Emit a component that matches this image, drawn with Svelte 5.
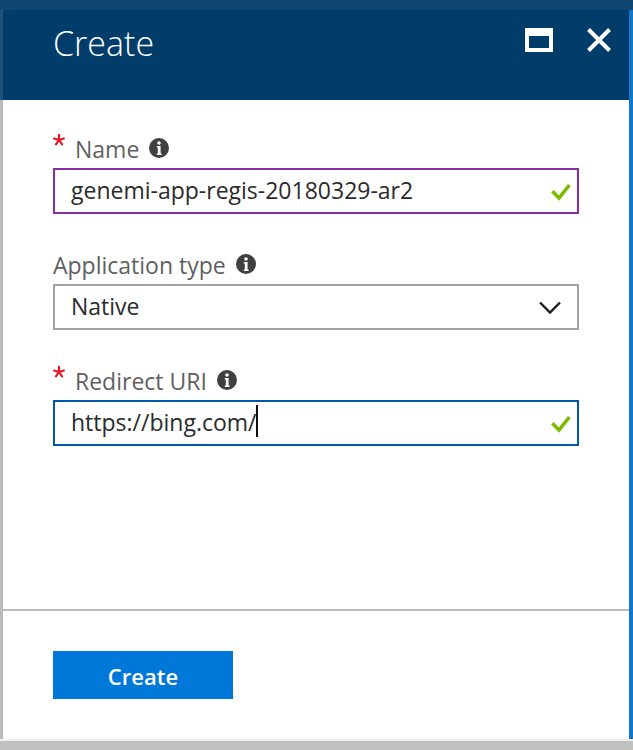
<script>
  let name = $state('genemi-app-regis-20180329-ar2');
  let appType = $state('Native');
  let redirectUri = $state('https://bing.com/');
</script>

{#snippet info()}
  <svg class="info" viewBox="0 0 20 20" aria-hidden="true">
    <circle cx="10" cy="10" r="10" fill="#404040" />
    <circle cx="10" cy="5" r="1.8" fill="#fff" />
    <path d="M7.8 8h3.8v7.4h1V17H7.8v-1.6h1V9.4h-1z" fill="#fff" />
  </svg>
{/snippet}

{#snippet star()}
  <svg class="star" viewBox="0 0 12 12" aria-hidden="true">
    <path d="M6 6V0M6 6L.3 4.2M6 6l5.7-1.8M6 6L2.4 11.2M6 6l3.6 5.2" stroke="#e81123" stroke-width="2.1" fill="none" />
  </svg>
{/snippet}

{#snippet check()}
  <svg class="check" viewBox="0 0 20 18" aria-hidden="true">
    <path d="M1.4 8.2L8 15L18.4 2" stroke="#7fba00" stroke-width="3.6" fill="none" />
  </svg>
{/snippet}

<div class="page">
  <div class="topbar"></div>
  <div class="stage">
    <div class="edge"></div>
    <section class="blade">
      <header>
        <h1>Create</h1>
        <div class="actions">
          <button type="button" aria-label="Maximize">
            <svg width="28" height="24" viewBox="0 0 28 24">
              <path d="M0 0h28v24H0zM4 8v12h20V8z" fill="#fff" fill-rule="evenodd" />
            </svg>
          </button>
          <button type="button" aria-label="Close">
            <svg width="24" height="24" viewBox="0 0 24 24">
              <path d="M1.5 1.5l21 21M22.5 1.5l-21 21" stroke="#fff" stroke-width="4" />
            </svg>
          </button>
        </div>
      </header>

      <form id="create-app" onsubmit={(e) => e.preventDefault()}>
        <div class="field">
          <label for="name">{@render star()}<span>Name</span>{@render info()}</label>
          <div class="box">
            <input id="name" class="edited" type="text" required bind:value={name} />
            {@render check()}
          </div>
        </div>
        <div class="field">
          <label for="type"><span>Application type</span>{@render info()}</label>
          <div class="box">
            <select id="type" bind:value={appType}>
              <option>Native</option>
              <option>Web app / API</option>
            </select>
            <svg class="chevron" viewBox="0 0 22 14" aria-hidden="true">
              <path d="M1 1.5l10 10l10-10" stroke="#1f1f1f" stroke-width="2.4" fill="none" />
            </svg>
          </div>
        </div>
        <div class="field">
          <label for="uri">{@render star()}<span>Redirect URI</span>{@render info()}</label>
          <div class="box">
            <input id="uri" class="active" type="text" required bind:value={redirectUri} />
            <i class="caret"></i>
            {@render check()}
          </div>
        </div>
      </form>

      <footer>
        <button class="primary" type="submit" form="create-app">Create</button>
      </footer>
    </section>
    <div class="accent"></div>
  </div>
  <div class="scrollbar"></div>
</div>

<style>
  .page {
    display: flex;
    flex-direction: column;
    min-height: 100vh;
    font-family: "Open Sans", "Noto Sans", sans-serif;
    font-size: 23px;
    color: #2b2b2b;
    background: #fff;
  }
  .topbar {
    height: 10px;
    background: #104672;
  }
  .stage {
    flex: 1;
    display: flex;
  }
  .edge {
    width: 3px;
    background: linear-gradient(#1f527b 90px, #bababa 90px);
  }
  .accent {
    width: 4px;
    background: #1078cc;
  }
  .blade {
    flex: 1;
    min-width: 0;
    display: flex;
    flex-direction: column;
  }
  header {
    display: flex;
    justify-content: space-between;
    align-items: flex-start;
    height: 90px;
    box-sizing: border-box;
    padding: 8px 18px 0 50px;
    background: #003d6b;
  }
  h1 {
    margin: 0;
    font-size: 34px;
    line-height: 50px;
    font-weight: 300;
    color: #fff;
  }
  .actions {
    display: flex;
    gap: 34px;
    padding-top: 10px;
  }
  .actions button {
    display: flex;
    padding: 0;
    border: 0;
    background: none;
  }
  form {
    flex: 1;
    display: flex;
    flex-direction: column;
    gap: 30px;
    padding: 28px 50px;
  }
  label {
    display: flex;
    align-items: center;
    height: 40px;
    line-height: 40px;
    color: #5f5f5f;
  }
  label span {
    padding-top: 2px;
  }
  .star {
    width: 12px;
    height: 12px;
    margin: 0 10px 16px 0;
  }
  .info {
    width: 20px;
    height: 20px;
    margin-left: 10px;
  }
  .box {
    position: relative;
  }
  input,
  select {
    display: block;
    width: 100%;
    height: 46px;
    box-sizing: border-box;
    margin: 0;
    padding: 0 48px 2px 16px;
    border: 2px solid #a3a3a3;
    border-radius: 0;
    outline: 0;
    appearance: none;
    background: #fff;
    color: inherit;
    font: inherit;
  }
  .edited {
    border-color: #8a2da5;
  }
  .active {
    border-color: #0058ad;
  }
  .check {
    position: absolute;
    right: 8px;
    top: 15px;
    width: 20px;
    height: 18px;
  }
  .chevron {
    position: absolute;
    right: 18px;
    top: 17px;
    width: 22px;
    height: 14px;
    pointer-events: none;
  }
  .caret {
    position: absolute;
    left: 203px;
    top: 5px;
    width: 2px;
    height: 32px;
    background: #111;
  }
  footer {
    padding: 40px 50px;
    border-top: 2px solid #bababa;
  }
  .primary {
    display: block;
    width: 180px;
    height: 48px;
    padding: 2px 0 0;
    border: 0;
    background: #0078d9;
    color: #fff;
    font: inherit;
    font-size: 22px;
    font-weight: 600;
  }
  .scrollbar {
    height: 9px;
    box-sizing: content-box;
    border-top: 2px solid #f0f0f0;
    background: #c1c1c1;
  }
</style>
